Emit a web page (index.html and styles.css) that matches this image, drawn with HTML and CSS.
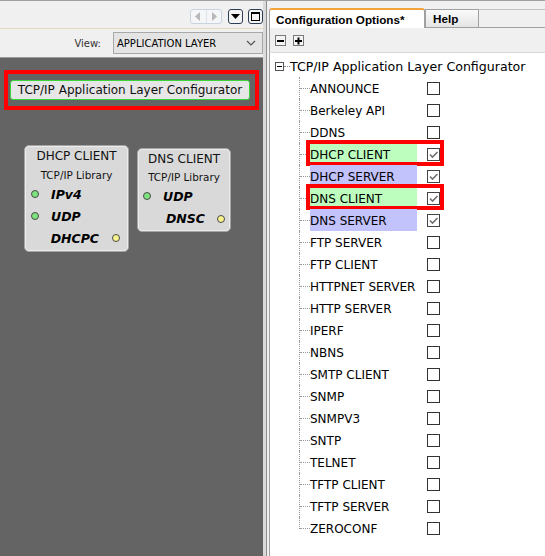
FILE: index.html
```html
<!DOCTYPE html>
<html>
<head>
<meta charset="utf-8">
<link rel="stylesheet" href="styles.css">
</head>
<body>
<div class="app">
  <div class="left">
    <div class="left-toolbar">
      <div class="nav-group">
        <span class="nav-btn"><svg width="6" height="9" viewBox="0 0 6 9"><path d="M5 0 L0 4.5 L5 9 Z" fill="#b8b8b8"/></svg></span>
        <span class="nav-btn"><svg width="6" height="9" viewBox="0 0 6 9"><path d="M1 0 L6 4.5 L1 9 Z" fill="#b8b8b8"/></svg></span>
      </div>
      <span class="tool-btn"><svg width="9" height="6" viewBox="0 0 9 6"><path d="M0 0 H9 L4.5 5 Z" fill="#000"/></svg></span>
      <span class="tool-btn"><svg width="9" height="9" viewBox="0 0 9 9"><rect x="0.5" y="0.5" width="8" height="8" fill="none" stroke="#000"/><rect x="0.5" y="0.5" width="8" height="1.5" fill="#000"/></svg></span>
    </div>
    <div class="view-row">
      <span class="view-label">View:</span>
      <div class="select">
        <span>APPLICATION LAYER</span>
        <svg width="10" height="6" viewBox="0 0 10 6"><path d="M1 1 L5 5 L9 1" fill="none" stroke="#555" stroke-width="1.2"/></svg>
      </div>
    </div>
    <div class="canvas">
      <div class="hl-red">
        <div class="cfg-btn">TCP/IP Application Layer Configurator</div>
      </div>
      <div class="node node-dhcp">
        <div class="node-title">DHCP CLIENT</div>
        <div class="node-sub">TCP/IP Library</div>
        <div class="port in"><span class="dot green"></span><span class="port-name">IPv4</span></div>
        <div class="port in"><span class="dot green"></span><span class="port-name">UDP</span></div>
        <div class="port out"><span class="port-name">DHCPC</span><span class="dot yellow"></span></div>
      </div>
      <div class="node node-dns">
        <div class="node-title">DNS CLIENT</div>
        <div class="node-sub">TCP/IP Library</div>
        <div class="port in"><span class="dot green"></span><span class="port-name">UDP</span></div>
        <div class="port out"><span class="port-name">DNSC</span><span class="dot yellow"></span></div>
      </div>
    </div>
  </div>
  <div class="split"></div>
  <div class="right">
    <div class="tabs">
      <div class="tab active">Configuration Options*</div>
      <div class="tab">Help</div>
      <div class="tab-fill"></div>
    </div>
    <div class="tree-toolbar">
      <span class="sq-btn"><svg width="9" height="9" viewBox="0 0 9 9"><rect x="1" y="4" width="7" height="2" fill="#000"/></svg></span>
      <span class="sq-btn"><svg width="9" height="9" viewBox="0 0 9 9"><rect x="1" y="4" width="7" height="2" fill="#000"/><rect x="3.5" y="1.5" width="2" height="7" fill="#000"/></svg></span>
    </div>
    <div class="tree">
      <div class="root-row">
        <span class="exp"><svg width="9" height="9" viewBox="0 0 9 9"><rect x="0.5" y="0.5" width="8" height="8" fill="#fff" stroke="#555"/><rect x="2" y="4" width="5" height="1" fill="#000"/></svg></span>
        <span class="root-dots"></span>
        <span class="root-label">TCP/IP Application Layer Configurator</span>
      </div>
      <div class="items">
        <div class="item"><span class="conn"></span><span class="lbl">ANNOUNCE</span><span class="cb"></span></div>
        <div class="item"><span class="conn"></span><span class="lbl">Berkeley API</span><span class="cb"></span></div>
        <div class="item"><span class="conn"></span><span class="lbl">DDNS</span><span class="cb"></span></div>
        <div class="item marked"><span class="conn"></span><span class="lbl green">DHCP CLIENT</span><span class="cb on"><svg width="11" height="11" viewBox="0 0 11 11"><path d="M2 5.5 L4.5 8 L9.5 3" fill="none" stroke="#707070" stroke-width="1.6"/></svg></span></div>
        <div class="item"><span class="conn"></span><span class="lbl blue">DHCP SERVER</span><span class="cb on"><svg width="11" height="11" viewBox="0 0 11 11"><path d="M2 5.5 L4.5 8 L9.5 3" fill="none" stroke="#707070" stroke-width="1.6"/></svg></span></div>
        <div class="item marked"><span class="conn"></span><span class="lbl green">DNS CLIENT</span><span class="cb on"><svg width="11" height="11" viewBox="0 0 11 11"><path d="M2 5.5 L4.5 8 L9.5 3" fill="none" stroke="#707070" stroke-width="1.6"/></svg></span></div>
        <div class="item"><span class="conn"></span><span class="lbl blue">DNS SERVER</span><span class="cb on"><svg width="11" height="11" viewBox="0 0 11 11"><path d="M2 5.5 L4.5 8 L9.5 3" fill="none" stroke="#707070" stroke-width="1.6"/></svg></span></div>
        <div class="item"><span class="conn"></span><span class="lbl">FTP SERVER</span><span class="cb"></span></div>
        <div class="item"><span class="conn"></span><span class="lbl">FTP CLIENT</span><span class="cb"></span></div>
        <div class="item"><span class="conn"></span><span class="lbl">HTTPNET SERVER</span><span class="cb"></span></div>
        <div class="item"><span class="conn"></span><span class="lbl">HTTP SERVER</span><span class="cb"></span></div>
        <div class="item"><span class="conn"></span><span class="lbl">IPERF</span><span class="cb"></span></div>
        <div class="item"><span class="conn"></span><span class="lbl">NBNS</span><span class="cb"></span></div>
        <div class="item"><span class="conn"></span><span class="lbl">SMTP CLIENT</span><span class="cb"></span></div>
        <div class="item"><span class="conn"></span><span class="lbl">SNMP</span><span class="cb"></span></div>
        <div class="item"><span class="conn"></span><span class="lbl">SNMPV3</span><span class="cb"></span></div>
        <div class="item"><span class="conn"></span><span class="lbl">SNTP</span><span class="cb"></span></div>
        <div class="item"><span class="conn"></span><span class="lbl">TELNET</span><span class="cb"></span></div>
        <div class="item"><span class="conn"></span><span class="lbl">TFTP CLIENT</span><span class="cb"></span></div>
        <div class="item"><span class="conn"></span><span class="lbl">TFTP SERVER</span><span class="cb"></span></div>
        <div class="item last"><span class="conn"></span><span class="lbl">ZEROCONF</span><span class="cb"></span></div>
      </div>
    </div>
  </div>
</div>
</body>
</html>
```

FILE: styles.css
```css
*, *::before, *::after { box-sizing: border-box; }
html, body { margin: 0; padding: 0; }
body {
  width: 545px;
  height: 556px;
  overflow: hidden;
  background: #f0f0f0;
  font-family: "DejaVu Sans", Verdana, sans-serif;
  font-size: 12px;
  color: #000;
}
.app {
  display: flex;
  height: 556px;
  border-top: 1px solid #a0a0a0;
}
.left {
  width: 263px;
  display: flex;
  flex-direction: column;
}
.left-toolbar {
  height: 28px;
  display: flex;
  justify-content: flex-end;
  align-items: flex-start;
  padding-top: 8px;
  gap: 5px;
  border-bottom: 1px solid #e2d9bf;
}
.nav-group {
  display: flex;
  width: 32px;
  height: 15px;
  border: 1px solid #c9d4e0;
  border-radius: 3px;
  background: #f4f6f8;
  margin-right: 1px;
}
.nav-btn {
  flex: 1;
  display: flex;
  align-items: center;
  justify-content: center;
}
.nav-btn + .nav-btn { border-left: 1px solid #dde3ea; }
.tool-btn {
  width: 15px;
  height: 15px;
  border: 1px solid #2c3e55;
  border-radius: 3px;
  background: #f4f4f4;
  display: flex;
  align-items: center;
  justify-content: center;
}
.view-row {
  height: 29px;
  display: flex;
  align-items: center;
  justify-content: flex-end;
  border-bottom: 1px solid #9a9a9a;
}
.view-label {
  font-size: 10px;
  color: #333;
  margin-right: 12px;
}
.select {
  width: 150px;
  height: 22px;
  border: 1px solid #a8a8a8;
  background: #e4e4e4;
  display: flex;
  align-items: center;
  justify-content: space-between;
  padding: 0 6px 0 3px;
  font-size: 10px;
  color: #000;
}
.canvas {
  flex: 1;
  background: #646464;
  position: relative;
  padding-top: 12px;
  padding-left: 4px;
}
.hl-red {
  width: 255px;
  height: 40px;
  border: 4px solid #ff0000;
  padding: 6px 5px 6px 2px;
}
.cfg-btn {
  height: 20px;
  border: 1px solid #3ad33a;
  border-radius: 3px;
  background: #e6e6e6;
  font-size: 12px;
  display: flex;
  align-items: center;
  justify-content: center;
  color: #111;
}
.node {
  position: absolute;
  background: #d9d9d9;
  border: 1px solid #a4a4a4;
  border-radius: 5px;
  box-shadow: inset 0 0 0 1px #ececec;
}
.node-dhcp { left: 24px; top: 87px; width: 105px; height: 107px; }
.node-dns { left: 137px; top: 90px; width: 94px; height: 84px; }
.node-title {
  font-size: 12px;
  text-align: center;
  margin-top: 3px;
  height: 15px;
  color: #111;
}
.node-sub {
  font-size: 10.4px;
  text-align: center;
  margin-top: 5px;
  height: 14px;
  color: #111;
}
.node-dns .node-title { margin-top: 3px; }
.node-dns .node-sub { margin-top: 4px; }
.port {
  height: 22px;
  display: flex;
  align-items: center;
  font-weight: bold;
  font-style: italic;
  font-size: 12.5px;
}
.port.in { padding-left: 6px; }
.port.in .port-name { margin-left: 12px; }
.port.out { justify-content: flex-end; padding-right: 8px; }
.port.out .port-name { margin-right: 13px; }
.dot {
  width: 8px;
  height: 8px;
  border-radius: 50%;
  border: 1px solid #4a4a4a;
  display: inline-block;
}
.dot.green { background: #7de37d; }
.dot.yellow { background: #f7f28c; }
.node-dns .port.in { padding-left: 5px; }
.node-dns .port.out { padding-right: 5px; height: 23px; }
.node-dns .port.out .port-name { margin-right: 12px; }

.split {
  width: 4px;
  background: #dadada;
  border-right: 1px solid #8e8e8e;
}
.right {
  flex: 1;
  display: flex;
  flex-direction: column;
  padding-left: 2px;
}
.tabs {
  display: flex;
  align-items: flex-end;
  height: 27px;
  padding-top: 7px;
}
.tab {
  height: 19px;
  padding: 0 0 0 7px;
  border: 1px solid #a0a0a0;
  background: linear-gradient(#fafafa, #e4e4e4);
  font-family: "Liberation Sans", Arial, sans-serif;
  font-weight: bold;
  font-size: 11.7px;
  display: flex;
  align-items: center;
  width: 54px;
}
.tab.active {
  width: 156px;
  height: 20px;
  background: #fff;
  border-top: 2px solid #f2a43a;
  border-radius: 3px 3px 0 0;
  border-bottom: none;
  padding-left: 6px;
}
.tab-fill {
  flex: 1;
  height: 19px;
  border-top: 1px solid #c4c4c4;
  border-bottom: 1px solid #a0a0a0;
}
.tree-toolbar {
  height: 24px;
  display: flex;
  align-items: center;
  gap: 7px;
  padding-left: 5px;
  border-left: 1px solid #a0a0a0;
}
.sq-btn {
  width: 11px;
  height: 11px;
  border: 1px solid #7a7a7a;
  background: #f4f4f4;
  display: flex;
  align-items: center;
  justify-content: center;
}
.tree {
  flex: 1;
  background: #fff;
  border-left: 1px solid #a0a0a0;
  border-top: 1px solid #d8d8d8;
  padding-top: 2px;
}
.root-row {
  height: 22px;
  display: flex;
  align-items: center;
  padding-left: 5px;
}
.exp { display: flex; width: 9px; height: 9px; }
.root-dots {
  width: 6px;
  border-top: 1px dotted #888;
}
.root-label { font-size: 12.6px; white-space: nowrap; padding-top: 1px; }
.items { padding-left: 29px; }
.item {
  height: 22px;
  display: flex;
  align-items: center;
  position: relative;
}
.conn {
  width: 11px;
  height: 22px;
  position: relative;
  border-left: 1px dotted #999;
}
.conn::after {
  content: "";
  position: absolute;
  left: 0;
  top: 11px;
  width: 10px;
  border-top: 1px dotted #999;
}
.item.last .conn { height: 12px; align-self: flex-start; }
.item.last .conn::after { top: 11px; }
.lbl {
  width: 107px;
  height: 22px;
  display: flex;
  align-items: center;
  font-size: 12px;
  white-space: nowrap;
  padding-top: 1px;
}
.lbl.green { background: #bdfdbd; }
.lbl.blue { background: #c2c2fc; }
.cb {
  width: 13px;
  height: 13px;
  border: 1px solid #333;
  margin-left: 10px;
  display: flex;
  align-items: center;
  justify-content: center;
  background: #fff;
}
.cb.on { border-color: #444; }
.item.marked::after {
  content: "";
  position: absolute;
  left: 7px;
  top: -3px;
  width: 138px;
  height: 26px;
  border: 4px solid #ff0000;
}
```
